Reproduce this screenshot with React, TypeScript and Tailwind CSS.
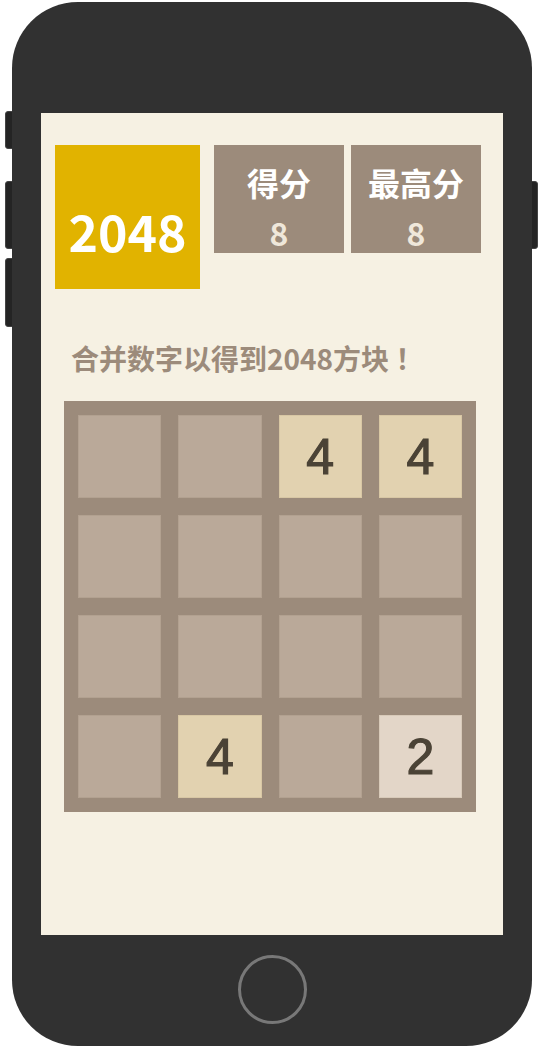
const board = [
  [0, 0, 4, 4],
  [0, 0, 0, 0],
  [0, 0, 0, 0],
  [0, 4, 0, 2],
];

function Tile({ value }: { value: number }) {
  if (value === 0) {
    return <div className="h-[83px] bg-[#baa999] border border-[#b2a190]" />;
  }
  const bg = value === 2 ? 'bg-[#e3d6c8] border-[#d8cab9]' : 'bg-[#e2d2b0] border-[#d8c7a4]';
  return (
    <div
      className={`h-[83px] border ${bg} flex items-center justify-center text-[50px] font-normal text-[#4b4336] [-webkit-text-stroke:1.2px_#4b4336] font-['Liberation_Sans',Arial,sans-serif] leading-none`}
    >
      {value}
    </div>
  );
}

export default function App() {
  return (
    <div className="w-[544px] h-[1048px] bg-white relative font-['Noto_Sans_CJK_SC','Noto_Sans',sans-serif]">
      {/* side buttons */}
      <div className="absolute left-[5px] top-[111px] w-[8px] h-[38px] rounded-l-[3px] bg-[#242424] border border-[#444]" />
      <div className="absolute left-[5px] top-[181px] w-[8px] h-[68px] rounded-l-[3px] bg-[#242424] border border-[#444]" />
      <div className="absolute left-[5px] top-[258px] w-[8px] h-[69px] rounded-l-[3px] bg-[#242424] border border-[#444]" />
      <div className="absolute left-[530px] top-[181px] w-[8px] h-[68px] rounded-r-[3px] bg-[#242424] border border-[#444]" />

      {/* phone body */}
      <div className="absolute left-[12px] top-[2px] w-[520px] h-[1044px] rounded-[66px] bg-[#313131] flex flex-col items-center pt-[111px]">
        {/* screen */}
        <div className="w-[462px] h-[822px] bg-[#f6f1e3] flex flex-col">
          {/* header */}
          <div className="flex pt-[32px] pl-[14px]">
            <div className="w-[145px] h-[144px] bg-[#e1b300] flex items-end justify-center pb-[34px]">
              <span className="text-white font-bold text-[50px] leading-none">2048</span>
            </div>
            <div className="ml-[14px] w-[130px] h-[108px] bg-[#9c8b7b] flex flex-col items-center pt-[21px]">
              <span className="text-white font-bold text-[32px] leading-none">得分</span>
              <span className="mt-[18px] text-[#efe7da] font-bold text-[32px] leading-none">8</span>
            </div>
            <div className="ml-[7px] w-[130px] h-[108px] bg-[#9c8b7b] flex flex-col items-center pt-[21px]">
              <span className="text-white font-bold text-[32px] leading-none">最高分</span>
              <span className="mt-[18px] text-[#efe7da] font-bold text-[32px] leading-none">8</span>
            </div>
          </div>

          {/* subtitle */}
          <div className="mt-[51px] pl-[30px] text-[28px] font-bold text-[#9c8b7b] leading-[36px]">
            合并数字以得到2048方块 ！
          </div>

          {/* board */}
          <div className="mt-[25px] ml-[23px] w-[412px] h-[411px] bg-[#9c8b7b] p-[14px] grid grid-cols-4 gap-[17px]">
            {board.flat().map((v, i) => (
              <Tile key={i} value={v} />
            ))}
          </div>
        </div>

        {/* home button */}
        <div className="mt-[20px] w-[69px] h-[69px] rounded-full border-[3px] border-[#787878]" />
      </div>
    </div>
  );
}
